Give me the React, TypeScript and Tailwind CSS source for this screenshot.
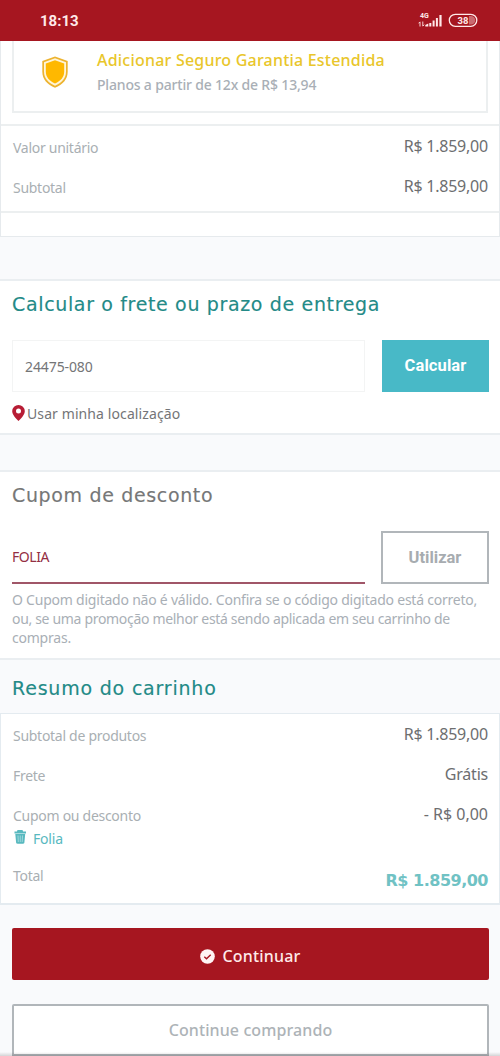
import { type ReactNode } from 'react';

const label = "font-['Noto_Sans',sans-serif] text-[14px] leading-5 text-[#a9afb3] tracking-[-0.28px]";
const value = "font-['Noto_Sans',sans-serif] text-[16px] leading-5 text-[#6d6e70] tracking-[-0.22px]";
const heading =
    "font-['DejaVu_Sans',sans-serif] text-[19px] leading-6 tracking-[0.65px] whitespace-nowrap [-webkit-text-stroke:0.15px_currentColor]";

function StatusBar() {
    return (
        <header className="flex h-[41px] shrink-0 items-center justify-between bg-[#a61620] pr-5 pl-10 text-[#ffe9e9]">
            <span className="font-[Roboto,sans-serif] text-[15px] leading-5 font-bold">18:13</span>
            <svg width="62" height="18" viewBox="0 0 62 18" fill="currentColor" className="-translate-y-px">
                <text x="2" y="7" fontSize="7" fontWeight="700" fontFamily="Roboto, sans-serif">
                    4G
                </text>
                <path
                    d="M2 11v4.500M.6 12.300 2 10.800M4.800 10.500V15M6.200 13.700 4.800 15.200"
                    fill="none"
                    stroke="currentColor"
                    strokeWidth=".9"
                />
                <path d="M7.300 15.500v-1.500l3-1.500v3zM11.300 12h2v3.500h-2zM14.600 9.500h2v6h-2zM17.900 7h2v8.500h-2zM21.400 4h2.200v11.500h-2.200z" />
                <rect x="31.300" y="3.300" width="27.500" height="12" rx="6" fill="none" stroke="currentColor" strokeWidth="1.300" />
                <path d="M51 5h2a4.300 4.300 0 0 1 0 8.600h-2z" opacity=".4" />
                <text x="45" y="12.800" fontSize="9.500" fontWeight="700" textAnchor="middle" fontFamily="Roboto, sans-serif">
                    38
                </text>
            </svg>
        </header>
    );
}

function Row({ name, children, className }: { name: string; children: ReactNode; className?: string }) {
    return (
        <div className={`flex h-10 items-start justify-between ${className ?? ''}`}>
            <span className={`${label} pt-0.5`}>{name}</span>
            <span className={value}>{children}</span>
        </div>
    );
}

function ProductCard() {
    return (
        <section className="h-[196px] shrink-0 border-x border-b border-[#e6eaed] bg-white">
            <div className="mx-[11px] flex h-[72px] border-2 border-t-0 border-[#eceff0] pl-[27px]">
                <svg width="28" height="34" viewBox="0 0 28 34" className="mt-3.5">
                    <path d="M14 1.400 26.700 6v10.500c0 8-5 13-12.700 16.200C6.300 29.500 1.300 24.500 1.300 16.500V6z" fill="#edb32f" />
                    <path d="M14 3.200 25 7.200v9.300c0 6.800-4.200 11.200-11 14.200C7.200 27.700 3 23.300 3 16.500V7.200z" fill="#fff5d8" />
                    <path d="M14 5.200 23.200 8.500v8c0 5.700-3.500 9.400-9.200 12.100-5.700-2.700-9.200-6.400-9.200-12.100v-8z" fill="#ffb800" />
                </svg>
                <div className="ml-7 pt-[7px] whitespace-nowrap">
                    <p className="font-['Noto_Sans',sans-serif] text-[16px] leading-6 font-medium tracking-[0.21px] text-[#e9c62b]">
                        Adicionar Seguro Garantia Estendida
                    </p>
                    <p className="pt-px font-['Noto_Sans',sans-serif] text-[14px] leading-6 font-medium tracking-[-0.18px] text-[#a9afb6]">
                        Planos a partir de 12x de R$ 13,94
                    </p>
                </div>
            </div>
            <div className="mt-[11px] h-[89px] border-y-2 border-[#eceff0] pt-2.5 pr-[11px] pl-3">
                <Row name="Valor unitário">R$ 1.859,00</Row>
                <Row name="Subtotal">R$ 1.859,00</Row>
            </div>
        </section>
    );
}

function Shipping() {
    return (
        <section className="mt-[42px] h-[156px] shrink-0 border-y-2 border-[#eaeef1] bg-white px-3 pt-[11px]">
            <h2 className={`${heading} text-[#238a87]`}>Calcular o frete ou prazo de entrega</h2>
            <div className="mt-6 flex h-[52px] justify-between">
                <div className="flex w-[353px] items-center border border-[#f3f4f4] pt-px pl-3 font-['Noto_Sans',sans-serif] text-[14px] tracking-[-0.1px] text-[#747577]">
                    24475-080
                </div>
                <button className="mr-[-1px] w-[107px] bg-[#48b9c7] font-[Roboto,sans-serif] text-[16.500px] font-bold tracking-[0.1px] text-white">
                    Calcular
                </button>
            </div>
            <div className="mt-3 flex items-center">
                <svg width="13" height="16" viewBox="0 0 13 16" className="-translate-y-px">
                    <path
                        d="M6.500 0A6.300 6.300 0 0 0 .2 6.200C.2 10.400 6.500 16 6.500 16s6.300-5.600 6.300-9.800A6.300 6.300 0 0 0 6.500 0zm0 8.500a2.500 2.500 0 1 1 0-5 2.500 2.500 0 0 1 0 5z"
                        fill="#b71d35"
                    />
                </svg>
                <span className="ml-[2px] font-['Noto_Sans',sans-serif] text-[14px] leading-5 tracking-[0.1px] text-[#747577]">
                    Usar minha localização
                </span>
            </div>
        </section>
    );
}

function Coupon() {
    return (
        <section className="mt-[35px] h-[190px] shrink-0 border-y-2 border-[#eaeef1] bg-white px-3 pt-[11px]">
            <h2 className={`${heading} text-[#767777]`}>Cupom de desconto</h2>
            <div className="mt-6 flex h-[53px] justify-between">
                <div className="flex w-[353px] items-center border-b-2 border-[#a05668] font-['Noto_Sans',sans-serif] text-[14px] tracking-[-0.45px] text-[#942f43]">
                    FOLIA
                </div>
                <button className="mr-[-1px] w-[108px] border-2 border-[#b1b6ba] pt-px font-[Roboto,sans-serif] text-[16.500px] font-bold text-[#a7acb0]">
                    Utilizar
                </button>
            </div>
            <p className="mt-1.5 font-['Noto_Sans',sans-serif] text-[14px] leading-[19px] tracking-[-0.225px] whitespace-nowrap text-[#a9afb6]">
                O Cupom digitado não é válido. Confira se o código digitado está correto,
                <br />
                <span className="tracking-[-0.32px]">ou, se uma promoção melhor está sendo aplicada em seu carrinho de</span>
                <br />
                compras.
            </p>
        </section>
    );
}

function Summary() {
    return (
        <section className="shrink-0 pt-4">
            <h2 className={`${heading} px-3 tracking-[0.8px]! text-[#238a87]`}>Resumo do carrinho</h2>
            <div className="mt-[13px] h-[192px] border border-b-2 border-[#e4ebf0] bg-white pt-2.5 pr-[11px] pl-3">
                <Row name="Subtotal de produtos">R$ 1.859,00</Row>
                <Row name="Frete">Grátis</Row>
                <Row name="Cupom ou desconto" className="h-6!">
                    <span className="tracking-normal">- R$ 0,00</span>
                </Row>
                <div className="flex h-[37px] items-start text-[#58b9bf]">
                    <svg width="13" height="14" viewBox="0 0 13 14" className="mt-0.5 ml-px">
                        <path d="M3.500 0h5l.6 1.500H12v2H.5v-2h2.400z" fill="#58b9bf" />
                        <path d="M1.300 4h9.900l-.8 8.500c-.1.800-.7 1.200-1.400 1.200H3.500c-.7 0-1.300-.4-1.400-1.200z" fill="#58b9bf" />
                        <path d="M4 5.500 4.300 12M6.250 5.500V12M8.500 5.500 8.200 12" stroke="#bfe4e6" strokeWidth=".7" />
                    </svg>
                    <span className="ml-[6px] pt-px font-['Noto_Sans',sans-serif] text-[14px] leading-5 tracking-[-0.2px]">Folia</span>
                </div>
                <div className="flex items-start justify-between">
                    <span className={`${label} pt-px`}>Total</span>
                    <span className="pt-1.5 font-['DejaVu_Sans',sans-serif] text-[16px] leading-5 font-bold tracking-[-0.5px] text-[#70c2c4]">
                        R$ 1.859,00
                    </span>
                </div>
            </div>
        </section>
    );
}

export default function App() {
    return (
        <main className="relative flex h-[1056px] w-[500px] flex-col overflow-hidden bg-[#f9fafc]">
            <StatusBar />
            <ProductCard />
            <Shipping />
            <Coupon />
            <Summary />
            <div className="mt-[23px] flex shrink-0 flex-col gap-6 pr-[11px] pl-3">
                <button className="flex h-[52px] items-center justify-center gap-[7px] rounded-[2px] bg-[#a61620] pt-1 font-['Noto_Sans',sans-serif] text-[16px] font-medium tracking-[0.2px] text-[#ffe9e9]">
                    <svg width="15" height="15" viewBox="0 0 15 15">
                        <circle cx="7.500" cy="7.500" r="7.300" fill="#fff4f4" />
                        <path d="m4.300 7.800 2.200 1.900 4.200-4" fill="none" stroke="#a61620" strokeWidth="1.400" />
                    </svg>
                    <span>Continuar</span>
                </button>
                <button className="h-[52px] rounded-t-[2px] border-2 border-[#b1b6ba] bg-white font-['Noto_Sans',sans-serif] text-[16px] font-medium tracking-[0.1px] text-[#adb3b7]">
                    Continue comprando
                </button>
            </div>
            <div className="absolute inset-x-0 bottom-0 h-1 bg-linear-to-b from-transparent to-black/15" />
        </main>
    );
}
